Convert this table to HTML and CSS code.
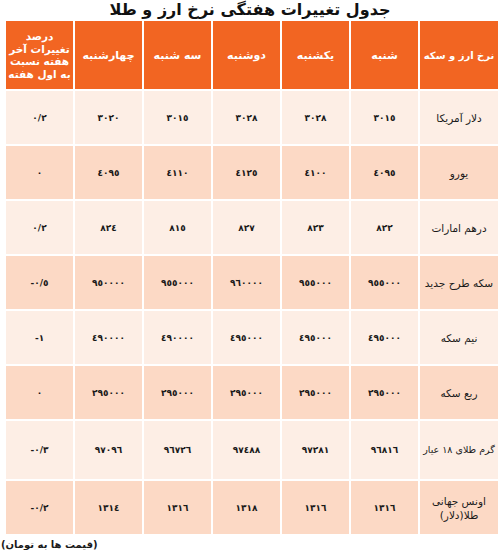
FILE: index.html
```html
<!DOCTYPE html>
<html lang="fa" dir="rtl">
<head>
  <meta charset="UTF-8" />
  <meta name="viewport" content="width=device-width, initial-scale=1.0"/>
  <title>جدول تغییرات هفتگی نرخ ارز و طلا</title>
  <link rel="stylesheet" href="styles.css">
</head>
<body>
  <h1 class="title">جدول تغییرات هفتگی نرخ ارز و طلا</h1>

  <div class="table-wrap">
    <table class="rates">
      <thead>
        <tr>
          <th class="name-col">نرخ ارز و سکه</th>
          <th>شنبه</th>
          <th>یکشنبه</th>
          <th>دوشنبه</th>
          <th>سه شنبه</th>
          <th>چهارشنبه</th>
          <th class="change-col">درصد تغییرات آخر هفته نسبت به اول هفته</th>
        </tr>
      </thead>
      <tbody>
        <tr>
          <td class="name">دلار آمریکا</td>
          <td>٣٠١٥</td><td>٣٠٢٨</td><td>٣٠٢٨</td><td>٣٠١٥</td><td>٣٠٢٠</td>
          <td class="num">٠/٢</td>
        </tr>
        <tr>
          <td class="name">یورو</td>
          <td>٤٠٩٥</td><td>٤١٠٠</td><td>٤١٢٥</td><td>٤١١٠</td><td>٤٠٩٥</td>
          <td class="num">٠</td>
        </tr>
        <tr>
          <td class="name">درهم امارات</td>
          <td>٨٢٢</td><td>٨٢٣</td><td>٨٢٧</td><td>٨١٥</td><td>٨٢٤</td>
          <td class="num">٠/٢</td>
        </tr>
        <tr>
          <td class="name">سکه طرح جدید</td>
          <td>٩٥٥٠٠٠</td><td>٩٥٥٠٠٠</td><td>٩٦٠٠٠٠</td><td>٩٥٥٠٠٠</td><td>٩٥٠٠٠٠</td>
          <td class="num">-٠/٥</td>
        </tr>
        <tr>
          <td class="name">نیم سکه</td>
          <td>٤٩٥٠٠٠</td><td>٤٩٥٠٠٠</td><td>٤٩٥٠٠٠</td><td>٤٩٠٠٠٠</td><td>٤٩٠٠٠٠</td>
          <td class="num">-١</td>
        </tr>
        <tr>
          <td class="name">ربع سکه</td>
          <td>٢٩٥٠٠٠</td><td>٢٩٥٠٠٠</td><td>٢٩٥٠٠٠</td><td>٢٩٥٠٠٠</td><td>٢٩٥٠٠٠</td>
          <td class="num">٠</td>
        </tr>
        <tr class="tall">
          <td class="name single">گرم طلای ١٨ عیار</td>
          <td>٩٦٨١٦</td><td>٩٧٢٨١</td><td>٩٧٤٨٨</td><td>٩٦٧٢٦</td><td>٩٧٠٩٦</td>
          <td class="num">-٠/٣</td>
        </tr>
        <tr>
          <td class="name">اونس جهانی طلا(دلار)</td>
          <td>١٣١٦</td><td>١٣١٦</td><td>١٣١٨</td><td>١٣١٦</td><td>١٣١٤</td>
          <td class="num">-٠/٢</td>
        </tr>
      </tbody>
    </table>
  </div>

  <p class="note">(قیمت ها به تومان)</p>
</body>
</html>
```

FILE: styles.css
```css
body {
  margin: 0;
  font-family: 'DejaVu Sans', sans-serif;
  background: white;
  color: #1a1a1a;
  width: 500px;
}

.title {
  margin: 0;
  height: 21px;
  font-size: 16px;
  line-height: 20px;
  font-weight: bold;
  text-align: center;
  color: #111;
}

.table-wrap {
  padding-left: 4px;
}

.rates {
  width: 100%;
  border-collapse: separate;
  border-spacing: 2px;
  margin-top: -2px;
  table-layout: fixed;
}

.rates th {
  background: #f26522;
  color: white;
  font-size: 11px;
  font-weight: bold;
  height: 68px;
  padding: 0 1px;
  line-height: 13px;
}

.rates th.name-col {
  width: 76px;
  font-size: 10px;
  white-space: nowrap;
}

.rates th.change-col {
  font-size: 10.5px;
  line-height: 12.5px;
}

.rates td {
  height: 53px;
  padding: 0 1px;
  text-align: center;
  font-size: 9px;
  font-weight: bold;
  background: #fdeee5;
}

.rates tbody tr:nth-child(even) td {
  background: #fcd9c5;
}

.rates tr.tall td {
  height: 58px;
}

.rates td.name {
  font-size: 10.5px;
  font-weight: normal;
  line-height: 14px;
}

.rates td.single {
  font-size: 9.5px;
  white-space: nowrap;
  letter-spacing: -0.2px;
}

.rates td.num {
  direction: ltr;
}

.note {
  margin: 3px 0 0;
  padding-left: 1px;
  font-size: 10px;
  font-weight: bold;
  text-align: left;
  direction: ltr;
}
```
